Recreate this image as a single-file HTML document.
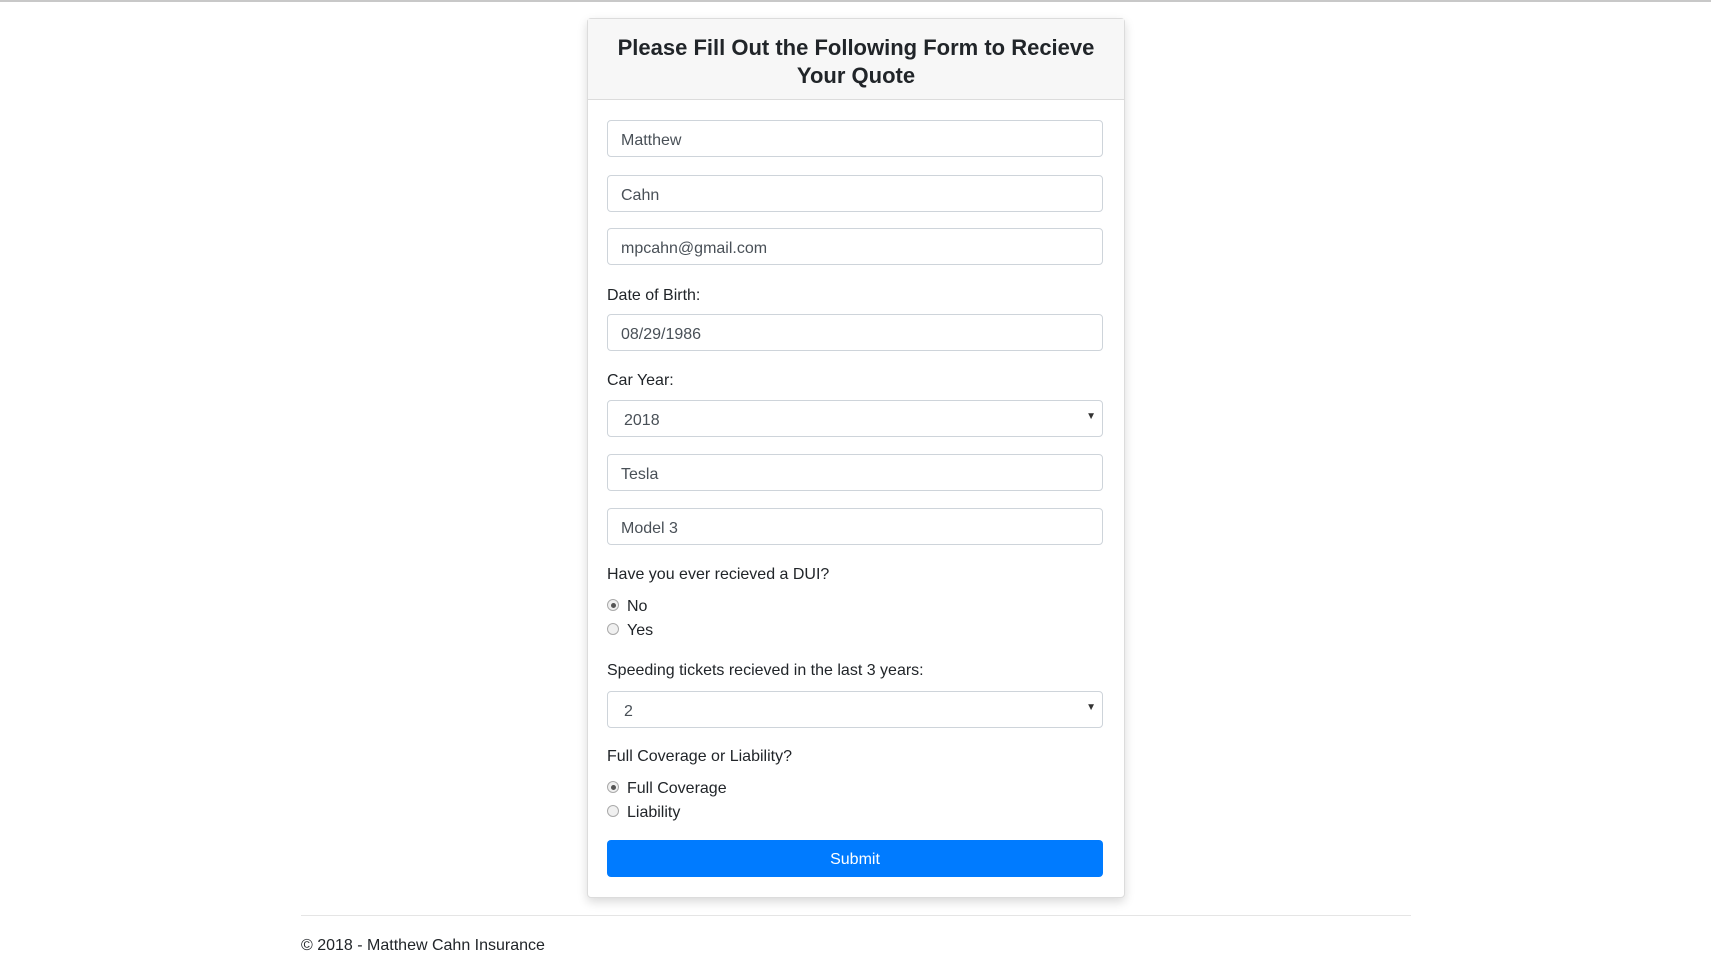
<!DOCTYPE html>
<html><head><meta charset="utf-8"><style>
*{box-sizing:border-box;margin:0;padding:0}
body{width:1711px;height:962px;background:#fff;font-family:"Liberation Sans",sans-serif;color:#212529;position:relative;overflow:hidden}
.topline{position:absolute;left:0;top:0;width:100%;height:2px;background:#c8c8c8}
.card{position:absolute;left:587px;top:18px;width:538px;height:880px;border:1px solid #dcdcdc;border-radius:4px;box-shadow:0 4px 10px rgba(0,0,0,.15);background:#fff}
.hdr{position:absolute;left:0;top:0;width:100%;height:81px;background:#f7f7f7;border-bottom:1px solid #dcdcdc;text-align:center;font-size:22px;font-weight:bold;line-height:28px;padding-top:15px;color:#212529}
.in{position:absolute;left:607px;width:496px;height:37px;border:1px solid #ced4da;border-radius:4px;font-size:16px;color:#495057;padding-left:13px;padding-top:2px;line-height:35px}
.lb{position:absolute;left:607px;font-size:16px;color:#212529;line-height:20px;margin-top:1px}
.arr{position:absolute;right:6px;top:-2px;font-size:10px;color:#333}
.rd{position:absolute;left:607px;width:12px;height:12px;border-radius:50%;border:1px solid #aaa;background:#f0f0f0}
.rd.on::after{content:"";position:absolute;left:2.5px;top:2.5px;width:5px;height:5px;border-radius:50%;background:#555}
.rt{position:absolute;left:627px;font-size:16px;line-height:20px;margin-top:1px}
.btn{position:absolute;left:607px;top:840px;width:496px;height:37px;background:#007bff;border-radius:4px;color:#fff;text-align:center;font-size:16px;line-height:39px}
.hr{position:absolute;left:301px;top:915px;width:1110px;border-top:1px solid #e5e5e5}
.ft{position:absolute;left:301px;top:936px;font-size:16px;line-height:20px}
</style></head><body>
<div class="topline"></div>
<div class="card"><div class="hdr">Please Fill Out the Following Form to Recieve<br>Your Quote</div></div>
<div class="in" style="top:120px">Matthew</div>
<div class="in" style="top:175px">Cahn</div>
<div class="in" style="top:228px">mpcahn@gmail.com</div>
<div class="lb" style="top:285px">Date of Birth:</div>
<div class="in" style="top:314px">08/29/1986</div>
<div class="lb" style="top:370px">Car Year:</div>
<div class="in" style="top:400px;padding-left:16px">2018<span class="arr">▼</span></div>
<div class="in" style="top:454px">Tesla</div>
<div class="in" style="top:508px">Model 3</div>
<div class="lb" style="top:564px">Have you ever recieved a DUI?</div>
<div class="rd on" style="top:599px"></div><div class="rt" style="top:596px">No</div>
<div class="rd" style="top:623px"></div><div class="rt" style="top:620px">Yes</div>
<div class="lb" style="top:660px">Speeding tickets recieved in the last 3 years:</div>
<div class="in" style="top:691px;padding-left:16px">2<span class="arr">▼</span></div>
<div class="lb" style="top:746px">Full Coverage or Liability?</div>
<div class="rd on" style="top:781px"></div><div class="rt" style="top:778px">Full Coverage</div>
<div class="rd" style="top:805px"></div><div class="rt" style="top:802px">Liability</div>
<div class="btn">Submit</div>
<div class="hr"></div>
<div class="ft">© 2018 - Matthew Cahn Insurance</div>
</body></html>
